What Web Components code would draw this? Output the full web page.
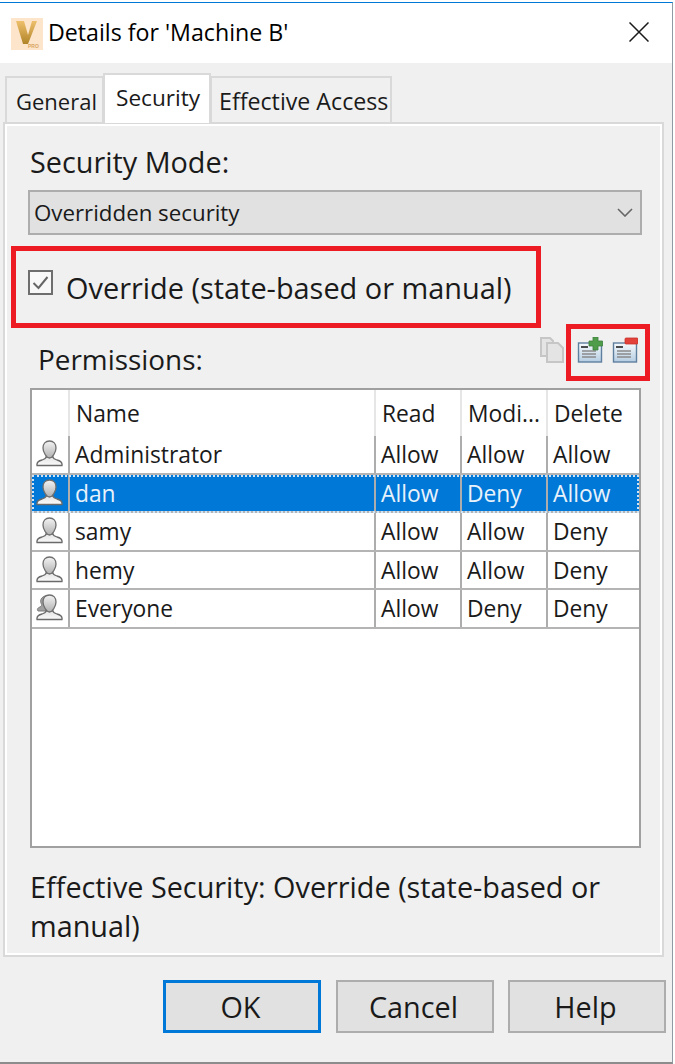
<!DOCTYPE html>
<html lang="en">
<head>
<meta charset="utf-8">
<title>Details for 'Machine B'</title>
<style>
  html, body { margin: 0; padding: 0; background: #fff; }
  body { font-family: "Open Sans", "Noto Sans", sans-serif; color: #1a1a1a; }
</style>
</head>
<body>
<details-dialog heading="Details for 'Machine B'">
  <tab-strip>
    <tab-item style="width:99px;padding-left:9px;font-size:22px">General</tab-item>
    <tab-item active style="width:108px;padding-left:11px;font-size:22.6px">Security</tab-item>
    <tab-item style="width:182px;padding-left:7px;font-size:23.2px">Effective Access</tab-item>
  </tab-strip>
  <security-pane></security-pane>
  <button-row>
    <dlg-button default>OK</dlg-button>
    <dlg-button>Cancel</dlg-button>
    <dlg-button>Help</dlg-button>
  </button-row>
</details-dialog>

<script>
const FONT_UI = '"Open Sans", "Noto Sans", sans-serif'

// ---- Window frame with title bar ---- //
class DetailsDialog extends HTMLElement {
    constructor() {
        super()
        this.attachShadow({ mode: 'open' }).innerHTML = `
        <style>
            :host { display: block; width: 673px; height: 1062px; margin-top: 2px; box-sizing: border-box;
                border-top: 1px solid #0078d7; border-right: 1px solid #8f9aa3; border-bottom: 2px solid #8c8c8c;
                background: #f0f0f0; font-family: ${FONT_UI}; overflow: hidden; position: relative; }
            .title { height: 60px; background: #fff; display: flex; align-items: center; padding-left: 11px; gap: 5px;
                box-sizing: border-box; position: relative; box-shadow: 1px 0 0 #0078d7; }
            .title span { font-size: 23.2px; color: #000; margin-bottom: 2px; }
            .close { margin-left: auto; margin-right: 23px; width: 20px; height: 20px; margin-bottom: 2px; }
            .logo { width: 32px; height: 32px; display: block; margin-top: 2px; }
            .body { padding: 10px 0 0 3px; }
        </style>
        <div class="title">
            <svg class="logo" viewBox="0 0 32 32">
                <defs><linearGradient id="v" x1="0" y1="0" x2="0" y2="1">
                    <stop offset="0" stop-color="#efc06c"/><stop offset="1" stop-color="#b08428"/></linearGradient></defs>
                <rect width="32" height="32" fill="#fde5cb"/>
                <path d="M5 3h8l4 14 4-14h5l-9 23h-5z" fill="url(#v)"/>
                <text x="17" y="30" font-size="5" font-weight="700" font-family="Liberation Sans" fill="#d8a765">PRO</text>
            </svg>
            <span></span>
            <svg class="close" viewBox="0 0 20 20"><path d="M.5.5l19 19M19.5.5l-19 19" stroke="#1a1a1a" stroke-width="1.5" fill="none"/></svg>
        </div>
        <div class="body"><slot></slot></div>`
        this.shadowRoot.querySelector('span').textContent = this.getAttribute('heading')
    }
}
customElements.define('details-dialog', DetailsDialog)

// ---- Tabs ---- //
class TabStrip extends HTMLElement {
    constructor() {
        super()
        this.attachShadow({ mode: 'open' }).innerHTML = `
        <style>
            :host { display: flex; align-items: flex-end; height: 49px; padding-left: 3px; position: relative; z-index: 1; }
        </style><slot></slot>`
    }
}
customElements.define('tab-strip', TabStrip)

class TabItem extends HTMLElement {
    constructor() {
        super()
        this.attachShadow({ mode: 'open' }).innerHTML = `
        <style>
            :host { display: block; box-sizing: border-box; height: 46px; margin-left: -1px; white-space: nowrap;
                background: #f0f0f0; border: 2px solid #d9d9d9; border-bottom: 0;
                line-height: 46px; color: #1a1a1a; }
            :host([active]) { height: 50px; background: #fff; line-height: 46px;
                margin-bottom: -1px; position: relative; }
        </style><slot></slot>`
    }
}
customElements.define('tab-item', TabItem)

// ---- Combo box ---- //
class ComboBox extends HTMLElement {
    constructor() {
        super()
        this.attachShadow({ mode: 'open' }).innerHTML = `
        <style>
            :host { display: flex; align-items: center; box-sizing: border-box; height: 45px; padding: 0 6px 0 4px;
                background: #e1e1e1; border: 2px solid #adadad; font-size: 22.3px; color: #1a1a1a; }
            svg { margin-left: auto; width: 16px; height: 9px; margin-right: 1px; }
        </style>
        <slot></slot>
        <svg viewBox="0 0 16 9"><path d="M1 1l7 7 7-7" fill="none" stroke="#666" stroke-width="1.6"/></svg>`
    }
}
customElements.define('combo-box', ComboBox)

// ---- Checkbox ---- //
class CheckBox extends HTMLElement {
    constructor() {
        super()
        this.attachShadow({ mode: 'open' }).innerHTML = `
        <style>
            :host { display: flex; align-items: center; gap: 13px; font-size: 28.9px; color: #1a1a1a; }
            svg { width: 25px; height: 25px; flex: none; margin-bottom: 10px; }
        </style>
        <svg viewBox="0 0 25 25">
            <rect x="1" y="1" width="23" height="23" fill="#f8f8f8" stroke="#6e6e6e" stroke-width="2"/>
            <path d="M5.500 13l5 5 9-11" fill="none" stroke="#666" stroke-width="2"/>
        </svg>
        <slot></slot>`
    }
}
customElements.define('check-box', CheckBox)

// ---- Small person icon used in the grid ---- //
class UserIcon extends HTMLElement {
    constructor() {
        super()
        const group = this.hasAttribute('group')
        this.attachShadow({ mode: 'open' }).innerHTML = `
        <style>:host { display: block; width: 27px; height: 27px; } svg { display: block; }</style>
        <svg width="27" height="27" viewBox="0 0 27 27">
            <defs>
              <linearGradient id="h" x1="0" y1="0" x2="0" y2="1"><stop offset="0" stop-color="#f4f4f4"/><stop offset="1" stop-color="#b0b0b0"/></linearGradient>
              <linearGradient id="b" x1="0" y1="0" x2="0" y2="1"><stop offset="0" stop-color="#e4e4e4"/><stop offset="1" stop-color="#fafafa"/></linearGradient>
            </defs>
            ${group ? '<path d="M7 3c4-3 9-1 9 4 0 4-2 8-4 10H2c-1-1-1-3 2-4 2-1 2-2 1-4-1-2 0-5 2-6z" fill="#a0a0a0" stroke="#7d7d7d"/>' : ''}
            <path d="M1 25.500c-.5-3 1-4.500 5-5.500 3-1 4-2 4-3h7c0 1 1 2 4 3 4 1 5.500 2.500 5 5.500z" fill="url(#b)" stroke="#6a6a6a" stroke-width="1.3"/>
            <path d="M13.500 1c4 0 6.500 3 6.500 7 0 4-3.500 10-6.500 10S7 12 7 8c0-4 2.500-7 6.500-7z" fill="url(#h)" stroke="#6e6e6e" stroke-width="1.3"/>
        </svg>`
    }
}
customElements.define('user-icon', UserIcon)

// ---- Permissions grid ---- //
const PERMS = [
    { name: 'Administrator', read: 'Allow', mod: 'Allow', del: 'Allow' },
    { name: 'dan', read: 'Allow', mod: 'Deny', del: 'Allow', selected: true },
    { name: 'samy', read: 'Allow', mod: 'Allow', del: 'Deny' },
    { name: 'hemy', read: 'Allow', mod: 'Allow', del: 'Deny' },
    { name: 'Everyone', read: 'Allow', mod: 'Deny', del: 'Deny', group: true },
]

class PermGrid extends HTMLElement {
    constructor() {
        super()
        const rows = PERMS.map(p => `
            <div class="row${p.selected ? ' sel' : ''}">
                <div class="c ic"><user-icon ${p.group ? 'group' : ''}></user-icon></div>
                <div class="c">${p.name}</div><div class="c">${p.read}</div><div class="c">${p.mod}</div><div class="c">${p.del}</div>
            </div>`).join('')
        this.attachShadow({ mode: 'open' }).innerHTML = `
        <style>
            :host { display: block; box-sizing: border-box; height: 460px; background: #fff; border: 2px solid #a0a0a0;
                font-size: 22.8px; color: #1a1a1a; }
            .row { display: grid; grid-template-columns: 38px 306px 86px 86px 1fr; height: 38.5px; box-sizing: border-box;
                border-bottom: 2px solid #b4b4b4; position: relative; }
            .head { height: 46px; border-bottom: 0; }
            .c { border-right: 2px solid #adadad; padding-left: 5px; line-height: 38px; white-space: nowrap; overflow: hidden; }
            .c:last-child { border-right: 0; }
            .ic { padding: 4px 0 0 4px; box-sizing: border-box; }
            .head .c { border-right-color: #e6e6e6; line-height: 47px; padding-left: 6px; }
            .head .c:last-child { border-right: 0; }
            .sel { background: #0078d7; color: #e8f2fb; outline: 2px dotted #cfe4f7; outline-offset: -2px; }
        </style>
        <div class="row head"><div class="c"></div><div class="c">Name</div><div class="c">Read</div><div class="c">Modi...</div><div class="c">Delete</div></div>
        ${rows}`
    }
}
customElements.define('perm-grid', PermGrid)

// ---- The two toolbar document icons + copy icon ---- //
class DocIcon extends HTMLElement {
    constructor() {
        super()
        const kind = this.getAttribute('kind')
        const extra = kind === 'add'
            ? '<path d="M16 0h5v4h4.500v5H21v4h-5V9h-4V4h4z" fill="#4f9d4a" stroke="#3c7f3c" stroke-width=".8"/>'
            : '<rect x="13" y="1" width="13" height="6" rx="1" fill="#e2423a" stroke="#c8342c" stroke-width=".8"/>'
        this.attachShadow({ mode: 'open' }).innerHTML = `
        <style>:host { display: block; width: 26px; height: 26px; } svg { display: block; }</style>
        ${kind === 'copy' ? `
        <svg width="26" height="26" viewBox="0 0 26 26" fill="#e4e4e4" stroke="#c6c6c6" stroke-width="2">
            <path d="M2 1h9l3 3v15H2z"/><path d="M8 6h11l5 5v14H8z"/>
        </svg>` : `
        <svg width="26" height="26" viewBox="0 0 26 26">
            <defs><linearGradient id="p" x1="0" y1="0" x2="0" y2="1"><stop offset="0" stop-color="#f6fafd"/><stop offset="1" stop-color="#b5cde2"/></linearGradient></defs>
            <rect x="1.500" y="6" width="23" height="19" fill="url(#p)" stroke="#5f7f9f" stroke-width="1.400"/>
            <path d="M4 10h7" stroke="#222" stroke-width="1.600"/>
            <path d="M5 14h14M5 17h14M5 20h14" stroke="#8a8a8a" stroke-width="1.400"/>
            ${extra}
        </svg>`}`
    }
}
customElements.define('doc-icon', DocIcon)

// ---- Main content of the Security tab ---- //
class SecurityPane extends HTMLElement {
    constructor() {
        super()
        this.attachShadow({ mode: 'open' }).innerHTML = `
        <style>
            :host { display: block; box-sizing: border-box; width: 661px; height: 835px; position: relative;
                border: 2px solid #d9d9d9; box-shadow: inset 0 0 0 2px #fff; padding: 20px 20px 0 23px; color: #1a1a1a; }
            .mode { font-size: 28.8px; line-height: 36px; margin-left: 2px; }
            combo-box { margin-top: 10px; }
            .over { box-sizing: border-box; height: 82px; margin: 11px 0 0 -17px; width: 530px; border: 5px solid #ed1c24;
                display: flex; align-items: center; padding: 0 0 0 12px; }
            .tools { display: flex; align-items: center; height: 60px; padding-left: 10px; }
            .tools .lbl { font-size: 27.9px; margin-top: 2px; }
            .tools .icons { margin-left: auto; display: flex; margin-right: 4px; margin-top: -17px; }
            .tools doc-icon[kind=add] { margin: 0 9px 0 12px; }
            .mark { position: absolute; left: 561px; top: 200px; width: 84px; height: 57px; box-sizing: border-box; border: 5px solid #ed1c24; }
            perm-grid { margin: 0 1px 0 2px; }
            .eff { font-size: 28.8px; line-height: 39px; margin: 19px 0 0 2px; width: 610px; }
        </style>
        <div class="mode">Security Mode:</div>
        <combo-box>Overridden security</combo-box>
        <div class="over"><check-box>Override (state-based or manual)</check-box></div>
        <div class="tools">
            <span class="lbl">Permissions:</span>
            <div class="icons"><doc-icon kind="copy"></doc-icon><doc-icon kind="add"></doc-icon><doc-icon kind="del"></doc-icon></div>
        </div>
        <div class="mark"></div>
        <perm-grid></perm-grid>
        <div class="eff">Effective Security: Override (state-based or manual)</div>`
    }
}
customElements.define('security-pane', SecurityPane)

// ---- Dialog buttons ---- //
class ButtonRow extends HTMLElement {
    constructor() {
        super()
        this.attachShadow({ mode: 'open' }).innerHTML = `
        <style>:host { display: flex; justify-content: flex-end; gap: 14px; padding: 23px 6px 0 0; }</style><slot></slot>`
    }
}
customElements.define('button-row', ButtonRow)

class DlgButton extends HTMLElement {
    constructor() {
        super()
        this.attachShadow({ mode: 'open' }).innerHTML = `
        <style>
            :host { display: flex; align-items: center; justify-content: center; box-sizing: border-box; width: 158px; height: 53px;
                padding-right: 3px; background: #e1e1e1; border: 2px solid #adadad; font-size: 28.8px; color: #1a1a1a; }
            :host([default]) { border: 3px solid #0078d7; margin-right: 1px; }
        </style><slot></slot>`
    }
}
customElements.define('dlg-button', DlgButton)
</script>
</body>
</html>
